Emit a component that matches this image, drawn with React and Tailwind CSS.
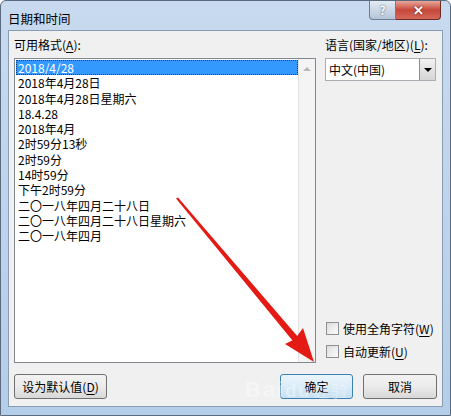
import React from "react";

const formats = [
  "2018/4/28",
  "2018年4月28日",
  "2018年4月28日星期六",
  "18.4.28",
  "2018年4月",
  "2时59分13秒",
  "2时59分",
  "14时59分",
  "下午2时59分",
  "二〇一八年四月二十八日",
  "二〇一八年四月二十八日星期六",
  "二〇一八年四月",
];

const Key = ({ k }) => (
  <>
    (<span className="underline underline-offset-2">{k}</span>)
  </>
);

const Checkbox = ({ children }) => (
  <div className="flex items-center gap-[4px] h-[23px]">
    <span className="w-[13px] h-[13px] border border-[#8e8f8f] bg-gradient-to-br from-[#dcdcdc] to-[#fbfbfb] p-[2px]">
      <span className="block w-full h-full bg-gradient-to-br from-[#e4e4e4] to-[#f7f7f7]" />
    </span>
    <span className="leading-[14px]">{children}</span>
  </div>
);

const Button = ({ children, primary, className = "" }) => (
  <button
    className={
      "h-[25px] rounded-[3px] border text-[12px] leading-none " +
      (primary
        ? "border-[#3c7fb1] bg-gradient-to-b from-[#eaf5fc] via-[#dcecf8] to-[#c6e0f2] "
        : "border-[#707070] bg-gradient-to-b from-[#f2f2f2] via-[#ebebeb] to-[#d8d8d8] ") +
      className
    }
  >
    {children}
  </button>
);

export default function App() {
  return (
    <div className="relative w-[451px] h-[416px] overflow-hidden rounded-t-[6px] border border-[#5a6b80] bg-gradient-to-b from-[#c7daef] via-[#bed4ec] to-[#b4cde8] font-['Noto_Sans_CJK_SC','Microsoft_YaHei',sans-serif] text-[12px] text-black">
      {/* title bar */}
      <div className="h-[29px] flex items-center pl-[7px]">
        <span className="text-[12.5px] leading-[14px] mt-[6px]">日期和时间</span>
      </div>
      <div className="absolute top-0 right-[9px] flex">
        <div className="w-[27px] h-[19px] rounded-bl-[4px] border border-t-0 border-[#6d7d92] bg-gradient-to-b from-[#e3ebf4] via-[#cbd7e4] to-[#b6c6d8] flex items-center justify-center text-[12px] font-bold text-white [text-shadow:0_0_2px_#34465e]">
          ?
        </div>
        <div className="w-[45px] h-[19px] rounded-br-[4px] border border-l-0 border-t-0 border-[#6d2a24] bg-gradient-to-b from-[#e6a699] via-[#c7473a] to-[#d4685a] flex items-center justify-center text-[13px] font-bold text-white [text-shadow:0_0_2px_#4a0f0a]">
          ✕
        </div>
      </div>

      {/* client area */}
      <div className="mx-[7px] h-[377px] border border-[#8a9cb3] bg-[#f0f0f0] flex flex-col px-[5px] pt-[7px]">
        <div className="flex gap-[9px]">
          <div className="w-[302px] flex flex-col">
            <div className="h-[20px] leading-[14px]">
              可用格式<Key k="A" />:
            </div>
            <div className="h-[305px] border border-[#828790] bg-white flex">
              <div className="flex-1 pl-[1px] pt-[1px]">
                {formats.map((f, i) => (
                  <div
                    key={f}
                    className={
                      "h-[15.3px] leading-[15.3px] pl-[2px] whitespace-nowrap " +
                      (i === 0 ? "bg-[#3399ff] text-white outline-1 outline-dotted outline-offset-[-1px] outline-[#1a3a66]" : "")
                    }
                  >
                    {f}
                  </div>
                ))}
              </div>
              <div className="w-[17px] bg-[#f4f4f4] border-l border-[#e2e2e2] flex flex-col items-center justify-between py-[8px]">
                <span className="w-0 h-0 border-x-[4px] border-x-transparent border-b-[4px] border-b-[#b8b8b8]" />
                <span className="w-0 h-0 border-x-[4px] border-x-transparent border-t-[4px] border-t-[#b8b8b8]" />
              </div>
            </div>
          </div>

          <div className="w-[111px] flex flex-col">
            <div className="h-[20px] leading-[14px] whitespace-nowrap">
              语言(国家/地区)<Key k="L" />:
            </div>
            <div className="h-[23px] border border-[#abadb3] bg-white flex">
              <div className="flex-1 pl-[3px] leading-[21px]">中文(中国)</div>
              <div className="w-[16px] border-l border-[#8c8c8c] bg-gradient-to-b from-[#f2f2f2] to-[#d6d6d6] flex items-center justify-center">
                <span className="w-0 h-0 border-x-[4px] border-x-transparent border-t-[4px] border-t-black" />
              </div>
            </div>
            <div className="flex-1" />
            <div className="pl-[1px]">
              <Checkbox>
                使用全角字符<Key k="W" />
              </Checkbox>
              <Checkbox>
                自动更新<Key k="U" />
              </Checkbox>
            </div>
          </div>
        </div>

        <div className="flex mt-[11px]">
          <Button className="w-[93px]">
            设为默认值<Key k="D" />
          </Button>
          <div className="flex-1" />
          <Button primary className="w-[73px]">确定</Button>
          <Button className="w-[74px] ml-[10px]">取消</Button>
        </div>
      </div>

      {/* watermark */}
      <div className="absolute left-[244px] top-[372px] text-[22px] font-bold text-white/40 tracking-[2px] pointer-events-none font-['Liberation_Sans',sans-serif]">
        Bai<span className="text-[18px]">du</span>
        <span className="text-[16px] font-normal ml-[2px] font-['Noto_Sans_CJK_SC',sans-serif]">经验</span>
      </div>

      {/* annotation arrow */}
      <svg className="absolute inset-0 pointer-events-none" width="451" height="416" viewBox="0 0 451 416">
        <polygon points="175,197.5 177,196.4 297.5,336.5 292.5,340.8" fill="#e31b14" />
        <polygon points="313,361 284,343 294,338 302,327" fill="#e31b14" />
      </svg>
    </div>
  );
}
